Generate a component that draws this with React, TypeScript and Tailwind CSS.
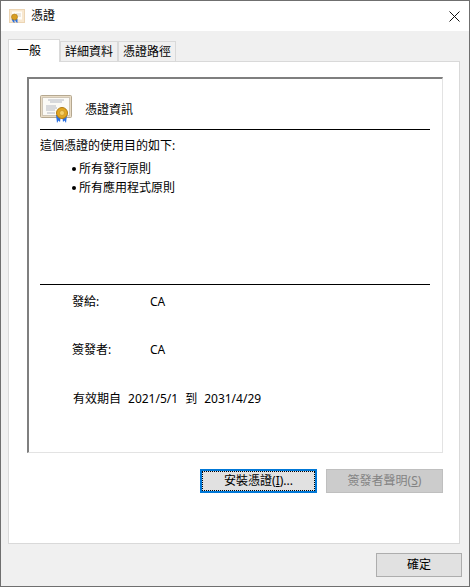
import React from 'react';

const font = 'font-["Noto_Sans","Noto_Sans_CJK_TC","Liberation_Sans",sans-serif]';

const CertIcon = () => (
  <svg viewBox="0 0 32 28" className="w-[32px] h-[28px]">
    <rect x="0.5" y="0.5" width="31" height="22" rx="1" fill="#e9dcc6" stroke="#b5a890" />
    <rect x="2.5" y="2.5" width="27" height="18" fill="#fbfaf6" stroke="#cfc6b6" />
    <path d="M8 5h16M10 7h12M6 11h10M6 13h11M6 15h9M7 18h8" stroke="#b4b8c2" strokeWidth="1" fill="none" />
    <path d="M16 20h5l-1 7-1.500-1.500L17 28zM22 20h5l-1 8-1.500-2.500L23 27z" fill="#2a6fe0" />
    <circle cx="22" cy="18" r="5.500" fill="#e2a721" stroke="#b07a12" />
    <circle cx="22" cy="18" r="2.500" fill="#f6d065" stroke="#bd8a1e" strokeWidth="0.6" />
  </svg>
);

const SmallCertIcon = () => (
  <svg viewBox="0 0 16 14" className="w-[16px] h-[14px]">
    <rect x="0.5" y="0.5" width="15" height="13" fill="#f8e8d0" stroke="#ecd5b4" />
    <rect x="3" y="2.500" width="10" height="8" fill="#fffdf9" />
    <path d="M7 5h5M7 7h5" stroke="#d9d2c6" strokeWidth="1" fill="none" />
    <path d="M2.500 10h3v4l-1.500-1zM5.500 10h3v4l-1.500-1z" fill="#2a6fe0" />
    <circle cx="5.500" cy="8" r="3" fill="#d99e22" stroke="#a97713" strokeWidth="0.6" />
  </svg>
);

const Tab = ({ label }: { label: string }) => (
  <div className="w-[58px] h-[20px] border border-b-0 border-[#d9d9d9] bg-[#f0f0f0] flex items-center justify-center leading-none">
    {label}
  </div>
);

const Bullet = ({ label }: { label: string }) => (
  <li className="leading-[14px] flex items-center">
    <span className="w-[4px] h-[4px] rounded-full bg-black mr-[3px]" />
    {label}
  </li>
);

export default function App() {
  return (
    <div className={`${font} w-[470px] h-[587px] border border-[#6f6f6f] bg-[#f0f0f0] flex flex-col text-[12px] text-black`}>
      {/* Title bar */}
      <div className="h-[30px] bg-white flex items-center pl-[8px] shrink-0">
        <SmallCertIcon />
        <span className="ml-[6px] leading-none">憑證</span>
        <svg viewBox="0 0 11 11" className="w-[11px] h-[11px] ml-auto mr-[9px]">
          <path d="M0.500 0.500L10.500 10.500M10.500 0.500L0.500 10.500" stroke="#111" strokeWidth="1" fill="none" />
        </svg>
      </div>

      {/* Tabs */}
      <div className="flex items-end pl-[7px] h-[30px] shrink-0 relative z-10">
        <div className="w-[52px] h-[23px] -mb-px border border-b-0 border-[#d9d9d9] bg-white flex items-center pl-[8px] pb-[1px] leading-none">
          一般
        </div>
        <Tab label="詳細資料" />
        <Tab label="憑證路徑" />
      </div>

      {/* Tab panel */}
      <div className="ml-[7px] w-[452px] h-[483px] bg-white border border-[#d9d9d9] pt-[15px] pl-[18px] shrink-0 flex flex-col">
        <div className="w-[416px] h-[376px] border-t-2 border-l-2 border-t-[#7f7f7f] border-l-[#7f7f7f] border-r border-b border-r-[#e3e3e3] border-b-[#e3e3e3] pl-[11px] pr-[12px] flex flex-col shrink-0">
          <div className="h-[51px] flex items-center border-b border-black pt-[10px] shrink-0">
            <CertIcon />
            <span className="ml-[13px] pt-[2px] leading-none">憑證資訊</span>
          </div>
          <div className="h-[155px] border-b border-black shrink-0 pt-[9px]">
            <p className="leading-[14px]">這個憑證的使用目的如下:</p>
            <ul className="mt-[9px] pl-[32px] flex flex-col gap-[5px]">
              <Bullet label="所有發行原則" />
              <Bullet label="所有應用程式原則" />
            </ul>
          </div>
          <div className="pl-[32px] pt-[10px] flex flex-col">
            <div className="flex leading-[14px]">
              <span className="w-[78px]">發給:</span>
              <span>CA</span>
            </div>
            <div className="flex leading-[14px] mt-[34px]">
              <span className="w-[78px]">簽發者:</span>
              <span>CA</span>
            </div>
            <div className="flex gap-[7px] leading-[14px] mt-[35px] pl-[1px]">
              <span>有效期自</span>
              <span>2021/5/1</span>
              <span>到</span>
              <span>2031/4/29</span>
            </div>
          </div>
        </div>

        {/* Panel buttons */}
        <div className="flex justify-end gap-[9px] mt-[16px] w-[416px]">
          <button className="w-[117px] h-[24px] border-2 border-[#0078d7] bg-[#e1e1e1] p-0 flex items-center justify-center">
            <span className="w-[113px] h-[20px] border border-dotted border-black flex items-center justify-center leading-none">
              安裝憑證(<span className="underline">I</span>)...
            </span>
          </button>
          <button className="w-[117px] h-[24px] border border-[#bfbfbf] bg-[#cccccc] text-[#838383] flex items-center justify-center leading-none">
            簽發者聲明(<span className="underline">S</span>)
          </button>
        </div>
      </div>

      {/* Footer */}
      <div className="flex justify-end pr-[7px] pt-[9px]">
        <button className="w-[86px] h-[24px] border border-[#adadad] bg-[#e1e1e1] flex items-center justify-center leading-none">
          確定
        </button>
      </div>
    </div>
  );
}
